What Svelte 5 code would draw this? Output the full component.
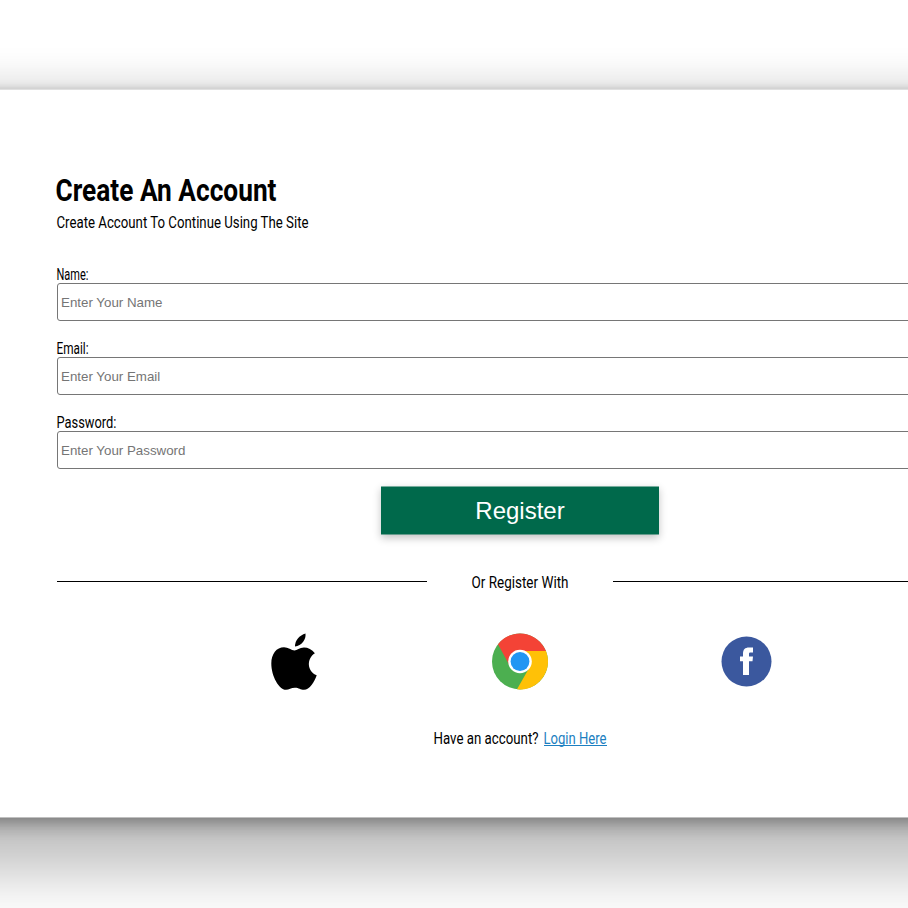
<script>
  const fields = [
    { id: 'name', label: 'Name:', width: 32, type: 'text', hint: 'Enter Your Name' },
    { id: 'email', label: 'Email:', width: 32, type: 'email', hint: 'Enter Your Email' },
    { id: 'password', label: 'Password:', width: 60, type: 'password', hint: 'Enter Your Password' }
  ];
</script>

<!-- Condensed lettering: each phrase is set to a fixed advance width -->
{#snippet condensed(text, width)}
  <svg class="type" {width} height="18">
    <text x="-0.5" y="15" textLength={width} lengthAdjust="spacingAndGlyphs">{text}</text>
  </svg>
{/snippet}

<div class="page">
  <main class="card">
    <div class="content">
      <h1>
        <svg class="type" width="221" height="36">
          <text x="-0.5" y="29" textLength="221" lengthAdjust="spacingAndGlyphs">Create An Account</text>
        </svg>
      </h1>
      <p class="intro">{@render condensed('Create Account To Continue Using The Site', 252)}</p>

      <form onsubmit={(e) => e.preventDefault()}>
        {#each fields as field}
          <div class="field">
            <label for={field.id}>{@render condensed(field.label, field.width)}</label>
            <input id={field.id} type={field.type} placeholder={field.hint} />
          </div>
        {/each}
        <button>Register</button>
      </form>

      <div class="divider">
        <span class="line"></span>
        <span class="or">{@render condensed('Or Register With', 97)}</span>
        <span class="line"></span>
      </div>

      <div class="social">
        <svg class="apple" width="46" height="58" viewBox="0 0 46 58">
          <path d="M24 13.5C23.700 8 28.500 2 34.500 .5C35.300 6.500 30.500 13 24 13.500Z" />
          <path d="M23.500 17.500C20.500 17.500 17 14.300 13 14.300C5.500 14.300 .3 21 .3 30.500C.3 43 8 56.800 15 56.800C18 56.800 20 54.700 24 54.700C28 54.700 29.300 56.800 33 56.800C38.500 56.800 43.500 49 45.700 42.300C36 38.500 35.300 25.500 43.900 20.200C41 16.500 37 14.500 33 14.500C28.500 14.500 26 17.500 23.500 17.500Z" />
        </svg>
        <svg class="chrome" width="56" height="57" viewBox="0 -0.5 56 57">
          <circle cx="28" cy="28" r="28" fill="#4caf50" />
          <path d="M28 28V17.500H53.950A28 28 0 0 1 25 55.840L38 33Z" fill="#ffc107" />
          <path d="M6 10.680A28 28 0 0 1 53.950 17.500H28L17 31Z" fill="#f44336" />
          <circle cx="28" cy="28" r="11.800" fill="#fff" />
          <circle cx="28" cy="28" r="9.400" fill="#2196f3" />
        </svg>
        <svg class="facebook" width="51" height="51" viewBox="0 0 51 51">
          <circle cx="25.500" cy="25.500" r="25" fill="#3b589e" />
          <path d="M22 39V25.300H19V20.500H22V17.500C22 13.500 24 11.500 28 11.500H32V16.400H29.500C28.200 16.400 28 17 28 18.200V20.500H32L31.500 25.300H28V39Z" fill="#fff" />
        </svg>
      </div>

      <p class="login">
        {@render condensed('Have an account?', 105)}
        <a href="#login">{@render condensed('Login Here', 63)}</a>
      </p>
    </div>
  </main>
</div>

<style>
  :global(body) {
    margin: 0;
    background: #fff;
  }
  .page {
    display: flow-root;
    height: 908px;
    overflow: hidden;
  }
  .card {
    box-sizing: border-box;
    width: 1240px;
    height: 729px;
    margin: 89px 0 0 -100px;
    padding: 82px 0 0 157px;
    border: solid #e0e0e0;
    border-width: 1px 0;
    border-bottom-color: #c0c0c0;
    background: #fff;
    background-clip: padding-box;
    box-shadow:
      rgba(0, 0, 0, 0.25) 0 54px 55px,
      rgba(0, 0, 0, 0.12) 0 -12px 30px,
      rgba(0, 0, 0, 0.12) 0 4px 6px,
      rgba(0, 0, 0, 0.17) 0 12px 13px,
      rgba(0, 0, 0, 0.09) 0 -3px 5px;
  }
  .content {
    width: 926px;
    font-family: Roboto, sans-serif;
  }
  .type {
    display: block;
    overflow: visible;
    font-size: 17px;
    fill: #000;
  }
  h1 {
    margin: 0 0 0 -1px;
    height: 36px;
  }
  h1 .type {
    font-size: 32px;
    font-weight: 700;
  }
  .intro {
    margin: 5px 0 34px;
  }
  .field {
    height: 74px;
  }
  label {
    display: block;
    height: 18px;
  }
  input {
    display: block;
    box-sizing: border-box;
    width: 926px;
    height: 38px;
    padding: 1px 3px;
    border: 1px solid #767676;
    border-radius: 3px;
    font: 13.333px 'Liberation Sans', sans-serif;
    background: #fff;
  }
  input::placeholder {
    color: #757575;
    opacity: 1;
  }
  button {
    display: block;
    box-sizing: border-box;
    width: 278px;
    height: 49px;
    margin: -1px 0 0 324px;
    padding: 0;
    border: solid rgba(0, 105, 75, 0.5);
    border-width: 1px 0;
    color: #fff;
    background: #00694b;
    background-clip: padding-box;
    font: 24px 'Liberation Sans', sans-serif;
    box-shadow: 0 3px 8px rgba(0, 0, 0, 0.24);
  }
  .divider {
    display: flex;
    justify-content: space-between;
    align-items: flex-start;
    height: 18px;
    margin-top: 38px;
  }
  .line {
    width: 370px;
    height: 1px;
    margin-top: 8px;
    background: #000;
  }
  .social {
    display: flex;
    align-items: flex-start;
    height: 57px;
    margin-top: 42px;
    padding-left: 214px;
  }
  .chrome {
    margin-left: 175px;
  }
  .facebook {
    margin: 3px 0 0 172.500px;
  }
  .login {
    display: flex;
    gap: 5px;
    margin: 39px 0 0 376.500px;
  }
  a {
    height: 16px;
    border-bottom: 1px solid #1c7fc1;
  }
  a .type {
    fill: #1c7fc1;
  }
</style>
